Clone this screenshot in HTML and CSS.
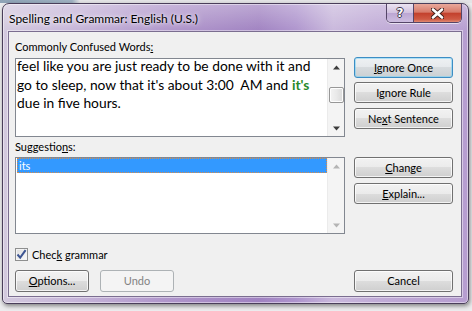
FILE: index.html
```html
<!DOCTYPE html>
<html>
<head>
<meta charset="utf-8">
<title>Spelling and Grammar</title>
<link rel="stylesheet" href="styles.css">
</head>
<body>
<div class="window">
  <div class="titlebar">
    <div class="title">Spelling and Grammar: English (U.S.)</div>
    <div class="caption">
      <div class="cbtn help"><span class="qmark">?</span></div>
      <div class="cbtn close">
        <svg width="13" height="11" viewBox="0 0 13 11"><path d="M2 1.5L11 9.5M11 1.5L2 9.5" stroke="#40201c" stroke-width="4.4" stroke-linecap="round"/><path d="M2 1.5L11 9.5M11 1.5L2 9.5" stroke="#fff" stroke-width="2.6" stroke-linecap="round"/></svg>
      </div>
    </div>
  </div>
  <div class="client">
    <div class="lbl lbl-top">Commonly Confused Words<u>:</u></div>
    <div class="section sec-top">
      <div class="box box-text">
        <div class="rich">feel like you are just ready to be done with it and<br>go to sleep, now that it's about 3:00&nbsp; AM and <span class="err">it's</span><br>due in five hours.</div>
        <div class="vscroll">
          <svg class="arrow" width="17" height="17" viewBox="0 0 17 17"><path d="M5 10.5h7L8.5 6.5z" fill="#3c3c3c"/></svg>
          <div class="track"><div class="thumb"></div></div>
          <svg class="arrow" width="17" height="17" viewBox="0 0 17 17"><path d="M5 7.5h7L8.5 11.5z" fill="#3c3c3c"/></svg>
        </div>
      </div>
      <div class="btncol">
        <div class="btn default"><u>I</u>gnore Once</div>
        <div class="btn">I<u>g</u>nore Rule</div>
        <div class="btn gap5">Ne<u>x</u>t Sentence</div>
      </div>
    </div>
    <div class="lbl lbl-sug">Suggestio<u>n</u>s:</div>
    <div class="section sec-sug">
      <div class="box box-list">
        <div class="list">
          <div class="item">its</div>
        </div>
        <div class="vscroll disabled">
          <svg class="arrow" width="17" height="17" viewBox="0 0 17 17"><path d="M5 10.5h7L8.5 6.5z" fill="#b4b4b4"/></svg>
          <div class="track"></div>
          <svg class="arrow" width="17" height="17" viewBox="0 0 17 17"><path d="M5 7.5h7L8.5 11.5z" fill="#b4b4b4"/></svg>
        </div>
      </div>
      <div class="btncol">
        <div class="btn"><u>C</u>hange</div>
        <div class="btn gap5"><u>E</u>xplain...</div>
      </div>
    </div>
    <div class="check-row">
      <div class="checkbox">
        <svg width="11" height="11" viewBox="0 0 11 11"><path d="M1.5 5.5L4.2 8.6L9.6 1.2" fill="none" stroke="#3d5592" stroke-width="2"/></svg>
      </div>
      <span>Chec<u>k</u> grammar</span>
    </div>
    <div class="bottom-row">
      <div class="left-btns">
        <div class="btn small"><u>O</u>ptions...</div>
        <div class="btn small disabled">Undo</div>
      </div>
      <div class="btn wide">Cancel</div>
    </div>
  </div>
</div>
</body>
</html>
```

FILE: styles.css
```css
* { box-sizing: border-box; margin: 0; padding: 0; }
html, body { width: 472px; height: 311px; overflow: hidden; }
body {
  padding: 3px 0 0 2px;
  background:
    linear-gradient(to bottom, rgba(236,236,238,0) 3px, #ececee 3px),
    linear-gradient(90deg, #8ea3b6 0, #9fb1c1 72px, #e4e4e6 80px);
  font-family: "Lato", "Noto Sans", sans-serif;
  font-size: 11px;
  color: #000;
}
.window {
  width: 467px;
  height: 301px;
  border: 1px solid #4a3e5a;
  border-radius: 7px 7px 5px 5px;
  background:
    linear-gradient(180deg, rgba(255,255,255,.3), rgba(255,255,255,0) 28px),
    linear-gradient(90deg, #d3c9de 0%, #c7b6d9 15%, #b096cb 35%, #a082c1 55%, #ae94cd 63%, #c9b8dc 71%, #c1acd7 80%, #b69dd0 100%);
  box-shadow: inset 0 0 0 1px rgba(255,255,255,.45), 1px 2px 4px rgba(0,0,0,.45);
  padding: 0 6px 6px 5px;
  display: flex;
  flex-direction: column;
}
.titlebar {
  height: 27px;
  display: flex;
  justify-content: space-between;
  align-items: flex-start;
}
.title {
  padding: 7px 0 0 1px;
  font-size: 12px;
  line-height: 16px;
  white-space: nowrap;
  text-shadow: 0 0 6px #fff, 0 0 3px rgba(255,255,255,.8);
}
.caption {
  display: flex;
  height: 19px;
  border: 1px solid #554668;
  border-top: none;
  border-radius: 0 0 5px 5px;
  overflow: hidden;
  box-shadow: 0 1px 0 rgba(255,255,255,.6);
}
.cbtn { height: 100%; display: flex; align-items: center; justify-content: center; }
.help {
  width: 27px;
  border-right: 1px solid #554668;
  background: linear-gradient(#ebe3f1, #d2c2e0 48%, #bca6d3 52%, #cdbde0);
}
.qmark {
  color: #fff;
  font-family: "DejaVu Sans", sans-serif;
  font-weight: bold;
  font-size: 12px;
  line-height: 12px;
  text-shadow: 1px 0 0 #3a3046, -1px 0 0 #3a3046, 0 1px 0 #3a3046, 0 -1px 0 #3a3046;
}
.close {
  width: 47px;
  background: linear-gradient(#e9a89b, #d77b6a 45%, #c3412d 52%, #cf5a44 85%, #e08a74);
}
.close svg { display: block; }

.client {
  flex: 1;
  border: 1px solid #7b6e90;
  background: #f0f0f0;
  padding: 8px 8px 0 6px;
  box-shadow: 0 0 0 1px rgba(255,255,255,.45);
}
.lbl { height: 14px; line-height: 14px; white-space: nowrap; }
.section { display: flex; gap: 9px; }
.sec-top { margin-top: 3px; }
.lbl-sug { margin-top: 3px; }
.sec-sug { margin-top: 3px; }

.box {
  width: 330px;
  border: 1px solid #828790;
  background: #fff;
  display: flex;
}
.box-text { height: 79px; margin-top: 1px; }
.box-list { height: 77px; }
.rich {
  flex: 1;
  padding-left: 1px;
  margin-top: -2px;
  font-family: "Lato", sans-serif;
  font-size: 13.8px;
  line-height: 18.5px;
  white-space: nowrap;
  overflow: hidden;
}
.err { color: #2a8a2a; font-weight: bold; }

.vscroll {
  width: 17px;
  display: flex;
  flex-direction: column;
  background: #f4f4f4;
  border-left: 1px solid #ebebeb;
}
.vscroll .arrow { display: block; flex: none; }
.track { flex: 1; display: flex; flex-direction: column; align-items: center; }
.thumb {
  margin-top: 11px;
  width: 15px;
  height: 16px;
  border: 1px solid #979797;
  border-radius: 2px;
  background: linear-gradient(90deg, #f3f3f3, #e9e9e9 50%, #dadada);
  box-shadow: inset 0 0 0 1px #fdfdfd;
}

.list { flex: 1; padding: 0 0 0 1px; }
.item {
  height: 15px;
  background: #3399ff;
  border: 1px dotted #d88c4a;
  color: #fff;
  line-height: 13px;
  padding-left: 1px;
}

.btncol { width: 99px; display: flex; flex-direction: column; }
.btn {
  height: 21px;
  border: 1px solid #707070;
  border-radius: 3px;
  background: linear-gradient(#f2f2f2 0, #ebebeb 50%, #dddddd 50%, #cfcfcf 100%);
  box-shadow: inset 0 0 0 1px rgba(255,255,255,.75);
  text-align: center;
  line-height: 19px;
  white-space: nowrap;
}
.btn + .btn { margin-top: 4px; }
.btn.gap5 { margin-top: 5px; }
.btn.default {
  border-color: #3c8dc4;
  background: linear-gradient(#eef1f3 0, #e6e9ec 50%, #d7dbde 50%, #cbd0d3 100%);
  box-shadow: inset 0 0 0 1px rgba(120,210,245,.55);
}

.check-row {
  margin-top: 13px;
  height: 14px;
  display: flex;
  align-items: center;
  gap: 4px;
}
.checkbox {
  width: 13px;
  height: 13px;
  border: 1px solid #8e8f8f;
  background: linear-gradient(135deg, #dcdcdc, #fbfbfb);
  box-shadow: inset 0 0 0 1px #f4f4f4;
  display: flex;
  align-items: center;
  justify-content: center;
}
.checkbox svg { display: block; }

.bottom-row {
  margin-top: 9px;
  display: flex;
  justify-content: space-between;
}
.left-btns { display: flex; gap: 11px; }
.btn.small { width: 74px; height: 22px; line-height: 20px; }
.btn.wide { width: 99px; height: 22px; line-height: 20px; }
.left-btns .btn + .btn { margin-top: 0; }
.btn.disabled {
  border-color: #adb2b5;
  background: #f4f4f4;
  box-shadow: none;
  color: #838383;
}
```
